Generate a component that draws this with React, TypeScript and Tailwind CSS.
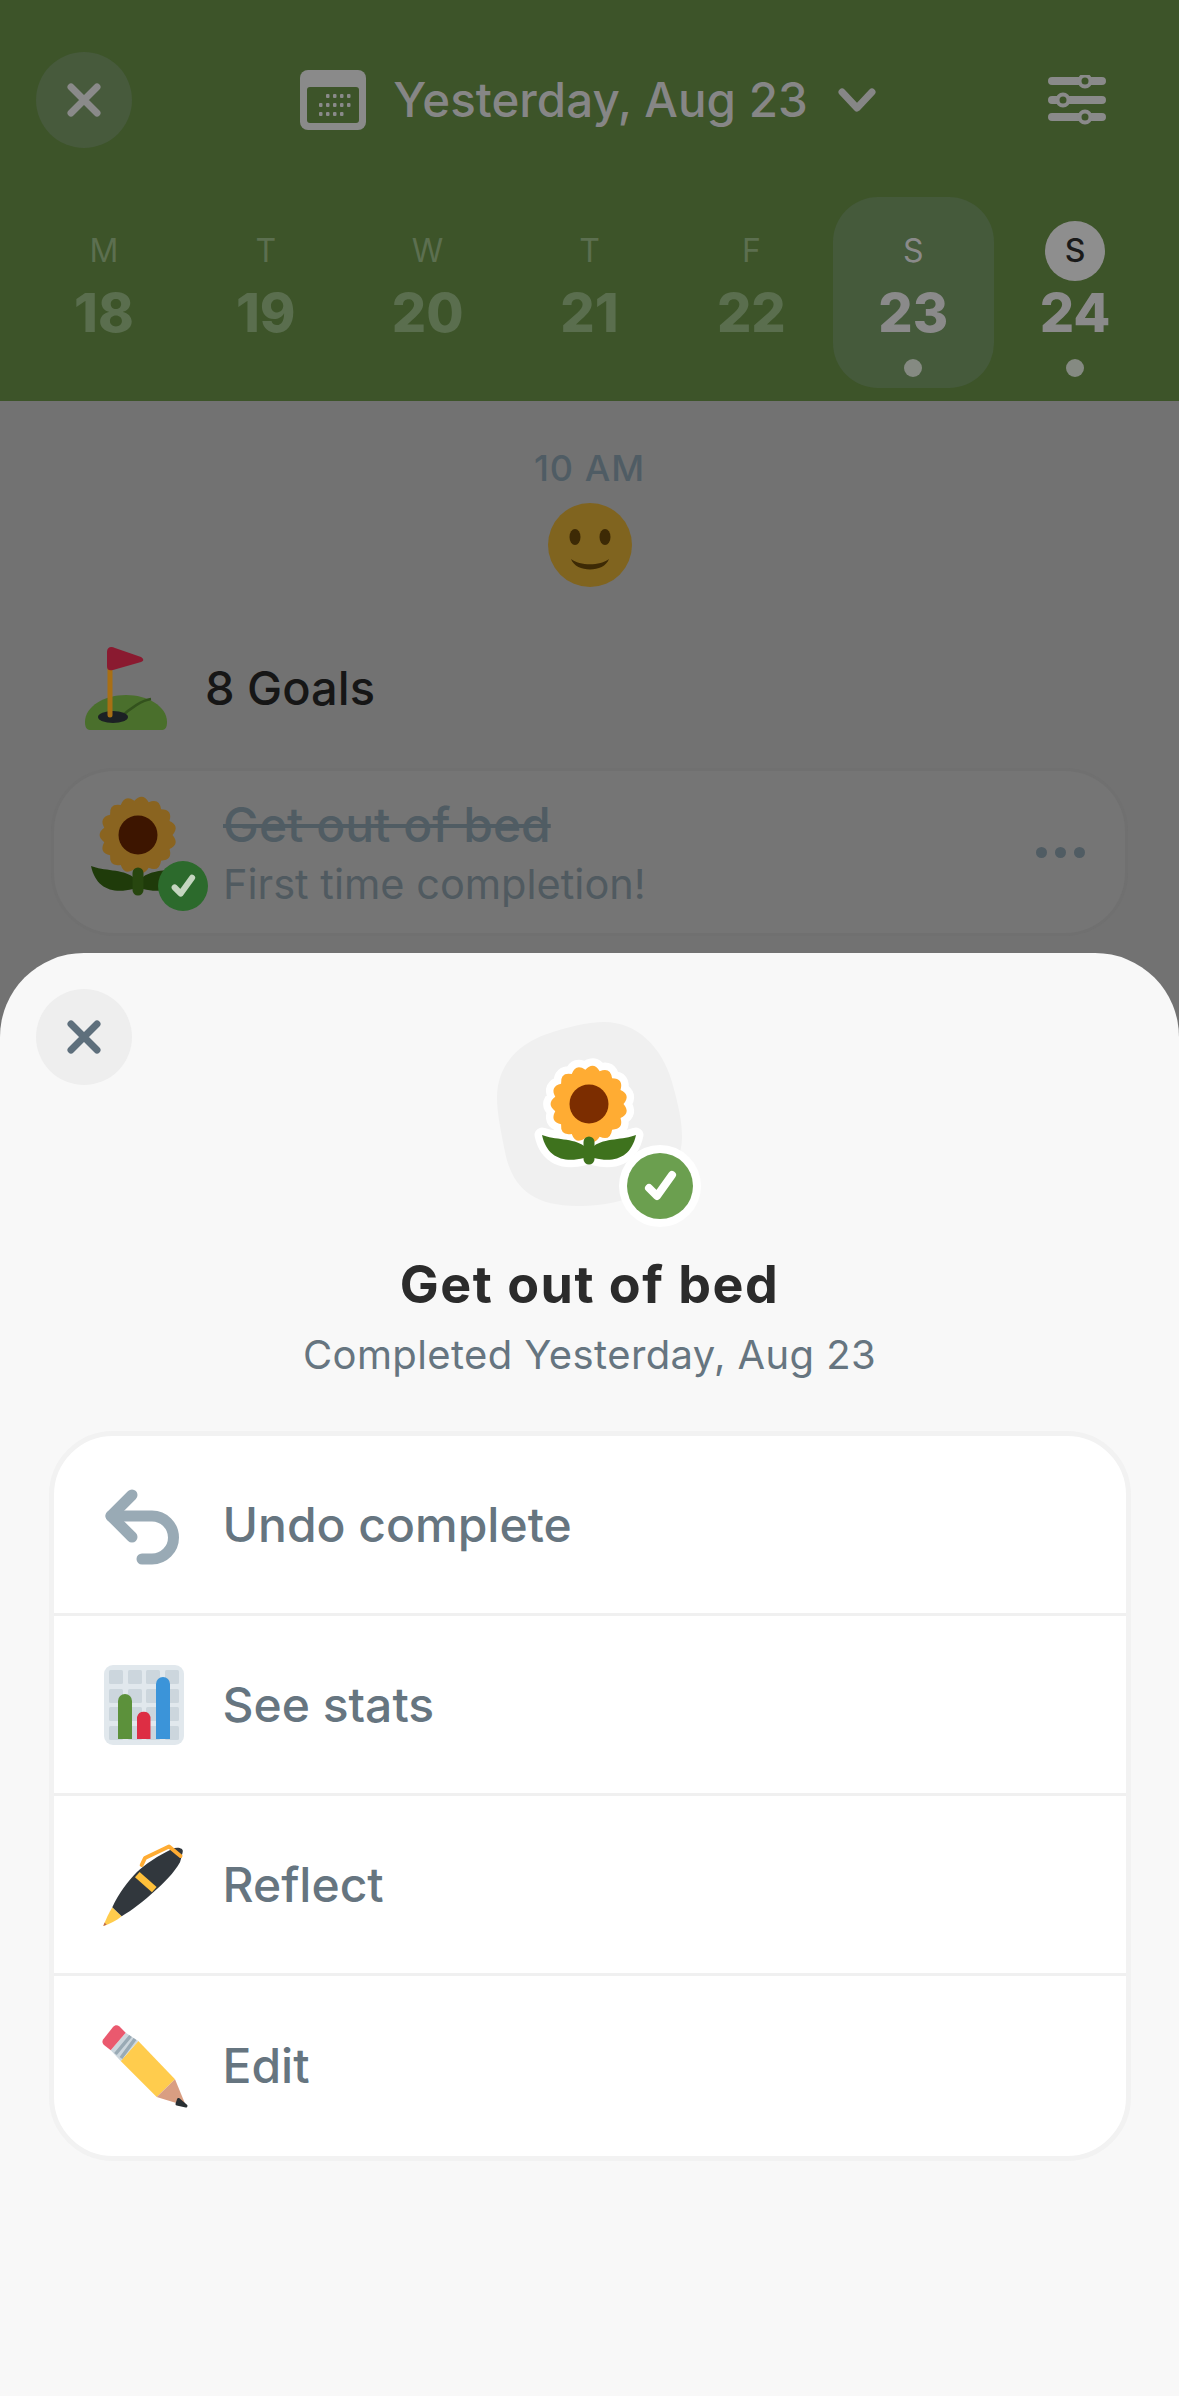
import React from 'react';

const FONT = "font-['Inter','Noto_Sans',sans-serif]";

interface Day {
  letter: string;
  date: number;
}

const days: Day[] = [
  { letter: 'M', date: 18 },
  { letter: 'T', date: 19 },
  { letter: 'W', date: 20 },
  { letter: 'T', date: 21 },
  { letter: 'F', date: 22 },
  { letter: 'S', date: 23 },
  { letter: 'S', date: 24 },
];

// scalloped petal ring for the sunflower
const petalPath = (cx: number, cy: number, r: number, dip: number, n = 16) => {
  let d = '';
  for (let i = 0; i < n; i++) {
    const a0 = (i / n) * Math.PI * 2;
    const a1 = ((i + 0.5) / n) * Math.PI * 2;
    const a2 = ((i + 1) / n) * Math.PI * 2;
    const p0 = [cx + (r - dip) * Math.cos(a0), cy + (r - dip) * Math.sin(a0)];
    const c = [cx + (r + dip * 0.9) * Math.cos(a1), cy + (r + dip * 0.9) * Math.sin(a1)];
    const p2 = [cx + (r - dip) * Math.cos(a2), cy + (r - dip) * Math.sin(a2)];
    if (i === 0) d += `M${p0[0].toFixed(2)} ${p0[1].toFixed(2)}`;
    d += ` Q${c[0].toFixed(2)} ${c[1].toFixed(2)} ${p2[0].toFixed(2)} ${p2[1].toFixed(2)}`;
  }
  return d + 'Z';
};

const LEFT_LEAF = 'M3 69C15 74 35 72 45 80L45 92C25 97 8 92 3 69Z';
const RIGHT_LEAF = 'M97 69C85 74 65 72 55 80L55 92C75 97 92 92 97 69Z';

const Sunflower: React.FC<{ dim?: boolean; className?: string }> = ({ dim, className }) => {
  const petals = petalPath(50, 38, 39, 4.5, 15);
  const petal = dim ? '#8a6420' : '#ffac33';
  const disc = dim ? '#3d1500' : '#7c2d00';
  const leaf = dim ? '#1f3b0a' : '#3e721d';
  return (
    <svg viewBox="0 0 100 104" className={`overflow-visible ${className ?? ''}`}>
      {!dim && (
        <g fill="#fff" stroke="#fff" strokeWidth="15" strokeLinejoin="round">
          <path d={petals} />
          <path d={LEFT_LEAF} />
          <path d={RIGHT_LEAF} />
          <path d="M50 76V93" />
        </g>
      )}
      <path d={LEFT_LEAF} fill={leaf} />
      <path d={RIGHT_LEAF} fill={leaf} />
      <path d={petals} fill={petal} />
      <circle cx="50" cy="38" r="19.5" fill={disc} />
      <path d="M50 76V93" stroke={dim ? '#27460f' : '#3e721d'} strokeWidth="11" strokeLinecap="round" />
    </svg>
  );
};

const CheckBadge: React.FC<{ size: number; fill: string; check: string; className?: string }> = ({
  size,
  fill,
  check,
  className,
}) => (
  <svg width={size} height={size} viewBox="0 0 66 66" className={className}>
    <circle cx="33" cy="33" r="33" fill={fill} />
    <path d="M22 35L30 43L45 22" fill="none" stroke={check} strokeWidth="8" strokeLinecap="round" strokeLinejoin="round" />
  </svg>
);

const CloseIcon: React.FC<{ color: string }> = ({ color }) => (
  <svg width="40" height="40" viewBox="0 0 40 40" fill="none" stroke={color} strokeWidth="7" strokeLinecap="round">
    <path d="M7 7L33 33M33 7L7 33" />
  </svg>
);

const CalendarIcon = () => (
  <svg width="66" height="60" viewBox="0 0 66 60">
    <rect width="66" height="60" rx="8" fill="#8a8a8a" />
    <rect x="7" y="17" width="52" height="36" rx="3" fill="#3d5429" />
    {[0, 1, 2, 3].map((c) => (
      <g key={c} fill="#8a8a8a">
        <rect x={26 + c * 7} y="24" width="3.5" height="4" rx="1" />
        <rect x={19 + c * 7} y="33" width="3.5" height="4" rx="1" />
        <rect x={19 + c * 7} y="42" width="3.5" height="4" rx="1" />
      </g>
    ))}
    <rect x="47" y="33" width="3.5" height="4" rx="1" fill="#8a8a8a" />
  </svg>
);

const SlidersIcon = () => (
  <svg width="58" height="50" viewBox="0 0 58 50" fill="none" stroke="#8a8a8a">
    <path d="M4 6H54M4 25H54M4 42H54" strokeWidth="8" strokeLinecap="round" />
    <g fill="#3d5429" strokeWidth="4">
      <circle cx="37" cy="6" r="5.5" />
      <circle cx="15" cy="25" r="5.5" />
      <circle cx="37" cy="42" r="5.5" />
    </g>
  </svg>
);

const Smiley = () => (
  <svg width="84" height="84" viewBox="0 0 84 84">
    <circle cx="42" cy="42" r="42" fill="#80641f" />
    <ellipse cx="27" cy="34" rx="5.5" ry="8" fill="#3d2a05" />
    <ellipse cx="57" cy="34" rx="5.5" ry="8" fill="#3d2a05" />
    <path d="M23 56C32 63 52 63 61 56C56 70 28 70 23 56Z" fill="#3d2a05" />
  </svg>
);

const GolfIcon = () => (
  <svg width="84" height="84" viewBox="0 0 84 84">
    <path d="M5 84C1 84 0 80 0 76C0 60 20 49 41 49C62 49 82 60 82 76C82 80 81 84 77 84Z" fill="#4a6f2c" />
    <path d="M35 72C45 62 58 54 66 53" fill="none" stroke="#33521d" strokeWidth="2.5" />
    <ellipse cx="28" cy="71" rx="15" ry="6" fill="#1c2124" />
    <path d="M25 19V69" stroke="#a86f14" strokeWidth="5" strokeLinecap="round" />
    <path d="M22 6C22 1 26 0 30 2L56 11C59 13 59 15 56 16L28 24C24 25 22 24 22 20Z" fill="#8a1a30" />
  </svg>
);

const UndoIcon = () => (
  <svg width="80" height="80" viewBox="0 0 80 80" fill="none" stroke="#99aab5" strokeWidth="11" strokeLinecap="round" strokeLinejoin="round" className="relative top-[4px]">
    <path d="M28 6L7 27L28 48" />
    <path d="M7 27H48A21.5 21.5 0 0 1 48 70H38" />
  </svg>
);

const StatsIcon = () => {
  const cells = [5, 24, 42, 61];
  return (
    <svg width="80" height="80" viewBox="0 0 80 80">
      <rect width="80" height="80" rx="9" fill="#e1e8ed" />
      {cells.map((x) =>
        cells.map((y) => <rect key={`${x}-${y}`} x={x} y={y} width="14" height="14" rx="1.5" fill="#ccd6dd" />),
      )}
      <path d="M14 74V36a7 7 0 0 1 14 0V74Z" fill="#5c913b" />
      <path d="M33 74V52a7 7 0 0 1 13.5 0V74Z" fill="#dd2e44" />
      <path d="M52 74V19a7 7 0 0 1 14 0V74Z" fill="#3b94d9" />
    </svg>
  );
};

const PenIcon = () => (
  <svg width="80" height="80" viewBox="0 0 80 80" className="overflow-visible">
    <path d="M8.3 62.3L17.7 71.3C12 76 6 79 -0.7 81C2 74 5 68 8.3 62.3Z" fill="#ffcc4d" />
    <path d="M-0.7 81L0.6 77.6L2.6 79.8Z" fill="#c1694f" />
    <path
      d="M8.3 62.3C15 48 24 36 32.7 27.3C40 20 55 10 68 4C73 1.5 80 3 78.7 7C78 10 77 14 76 17.3C70 28 60 38 51 45.7C40 56 28 65 17.7 71.3Z"
      fill="#31373d"
    />
    <path d="M33.3 29.7L50.3 44.7" stroke="#ffc03a" strokeWidth="7" />
    <path d="M37.7 20L41 13L65 1.5L76.5 11" fill="none" stroke="#ffac33" strokeWidth="4" strokeLinejoin="round" strokeLinecap="round" />
  </svg>
);

const PencilIcon = () => (
  <svg width="80" height="80" viewBox="0 0 80 80" className="overflow-visible">
    <path d="M16.7 35L34.3 15L71 53.3L52.7 71Z" fill="#ffcc4d" />
    <path d="M52.7 71L71 53.3L82 80Z" fill="#d99e82" />
    <path d="M74.5 73.5L82 80L73 78Z" fill="#292f33" stroke="#292f33" strokeWidth="3" strokeLinejoin="round" />
    <path d="M6.7 24.3L21.7 6.7L34.3 15L16.7 35Z" fill="#ccd6dd" />
    <path d="M11.5 28L26.5 10M17 32L31 13" stroke="#99aab5" strokeWidth="3.5" />
    <path d="M-0.7 13.3C-2 15 -2 17 0 19L6.7 24.3L21.7 6.7L15.5 0.5C13 -1.5 11 -1 9 1Z" fill="#ea596e" />
  </svg>
);

interface Action {
  label: string;
  icon: React.ReactNode;
}

const actions: Action[] = [
  { label: 'Undo complete', icon: <UndoIcon /> },
  { label: 'See stats', icon: <StatsIcon /> },
  { label: 'Reflect', icon: <PenIcon /> },
  { label: 'Edit', icon: <PencilIcon /> },
];

const App: React.FC = () => {
  return (
    <div className={`${FONT} relative h-[2396px] w-full overflow-hidden bg-[#727272]`}>
      {/* dimmed page behind the sheet */}
      <header className="h-[401px] bg-[#3d5429] pt-[52px]">
        <div className="flex h-[96px] items-center justify-between pl-[36px] pr-[73px]">
          <div className="flex size-[96px] items-center justify-center rounded-full bg-[#475a3c]">
            <CloseIcon color="#8a8a8a" />
          </div>
          <div className="relative left-[-2px] flex items-center">
            <CalendarIcon />
            <span className="ml-[27px] text-[47.5px] font-medium text-[#868686]">Yesterday, Aug 23</span>
            <svg width="38" height="24" viewBox="0 0 38 24" fill="none" stroke="#868686" strokeWidth="7" strokeLinecap="round" strokeLinejoin="round" className="ml-[30px]">
              <path d="M4 4L19 20L34 4" />
            </svg>
          </div>
          <SlidersIcon />
        </div>
        <div className="mt-[49px] grid grid-cols-7 px-[23px]">
          {days.map((day) => {
            const selected = day.date === 23;
            const today = day.date === 24;
            return (
              <div key={day.date} className="flex justify-center">
                <div className={`flex h-[191px] w-[161px] flex-col items-center rounded-[45px] pt-[24px] ${selected ? 'bg-[#455a3b]' : ''}`}>
                  <div className={`flex size-[60px] items-center justify-center rounded-full text-[32px] leading-none ${today ? 'bg-[#8e8e8e] font-medium text-[#1a1a1a]' : selected ? 'text-[#8a8a8a]' : 'text-[#5c6f50]'}`}>
                    {day.letter}
                  </div>
                  <div className={`mt-[2px] text-[54px] font-extrabold leading-[60px] ${selected || today ? 'text-[#8a8a8a]' : 'text-[#5a6e4e]'}`}>
                    {day.date}
                  </div>
                  {(selected || today) && <div className="mt-[16px] size-[18px] rounded-full bg-[#858a82]" />}
                </div>
              </div>
            );
          })}
        </div>
      </header>

      <main className="flex flex-col">
        <div className="mt-[47px] text-center text-[36px] font-medium leading-[40px] tracking-[1px] text-[#4f5c64]">10 AM</div>
        <div className="mt-[15px] flex justify-center">
          <Smiley />
        </div>
        <div className="ml-[85px] mt-[59px] flex items-center">
          <GolfIcon />
          <span className="ml-[36px] text-[47px] font-medium text-[#161616]">8 Goals</span>
        </div>
        <div className="relative mx-[54px] mt-[41px] flex h-[162px] items-center rounded-[60px] bg-[#757575] pl-[169px] shadow-[0_0_0_3px_#707070]">
          <Sunflower dim className="absolute left-[34px] top-[26px] w-[100px]" />
          <CheckBadge size={50} fill="#2c6a2c" check="#c5d6c0" className="absolute left-[104px] top-[90px]" />
          <div className="relative top-[2px] flex flex-col">
            <span className="text-[48px] font-medium leading-[60px] text-[#505c63] line-through">Get out of bed</span>
            <span className="text-[41.5px] leading-[58px] text-[#505a60]">First time completion!</span>
          </div>
          <div className="absolute right-[40px] top-[76px] flex gap-[8px]">
            <span className="size-[11px] rounded-full bg-[#505c63]" />
            <span className="size-[11px] rounded-full bg-[#505c63]" />
            <span className="size-[11px] rounded-full bg-[#505c63]" />
          </div>
        </div>
      </main>

      {/* bottom sheet */}
      <section className="absolute inset-x-0 bottom-0 flex h-[1443px] flex-col items-center rounded-t-[84px] bg-[#f8f8f8] pt-[69px]">
        <div className="absolute left-[36px] top-[36px] flex size-[96px] items-center justify-center rounded-full bg-[#eeeeee]">
          <CloseIcon color="#5e6f7c" />
        </div>
        <div className="relative h-[184px] w-[185px]">
          <svg width="185" height="184" viewBox="0 0 185 184">
            <path
              d="M107 0C140 0 165 25 175 60C182 85 185 100 185 115C185 155 145 184 80 184C35 184 15 165 8 130C3 105 0 90 0 75C0 45 20 22 50 12C70 5 90 0 107 0Z"
              fill="#f0f0f0"
            />
          </svg>
          <Sunflower className="absolute left-[42px] top-[44px] w-[100px]" />
          <div className="absolute left-[122px] top-[123px] rounded-full bg-white p-[8px]">
            <CheckBadge size={66} fill="#6b9f4f" check="#ffffff" className="block" />
          </div>
        </div>
        <h1 className="mt-[50px] text-[52px] font-bold leading-[58px] tracking-[1.5px] text-[#2b2b2b]">Get out of bed</h1>
        <p className="mt-[18px] text-[40px] leading-[46px] tracking-[0.4px] text-[#667580]">Completed Yesterday, Aug 23</p>
        <div className="mt-[53px] w-[1082px] rounded-[64px] border-[5px] border-[#f2f2f2] bg-white">
          {actions.map((action, i) => (
            <div
              key={action.label}
              className={`flex h-[180px] items-center pl-[50px] ${i < actions.length - 1 ? 'border-b-[3px] border-[#f0f0f0]' : ''}`}
            >
              <div className="flex size-[80px] items-center justify-center">{action.icon}</div>
              <span className="ml-[39px] text-[48px] font-medium text-[#667580]">{action.label}</span>
            </div>
          ))}
        </div>
      </section>
    </div>
  );
};

export default App;
